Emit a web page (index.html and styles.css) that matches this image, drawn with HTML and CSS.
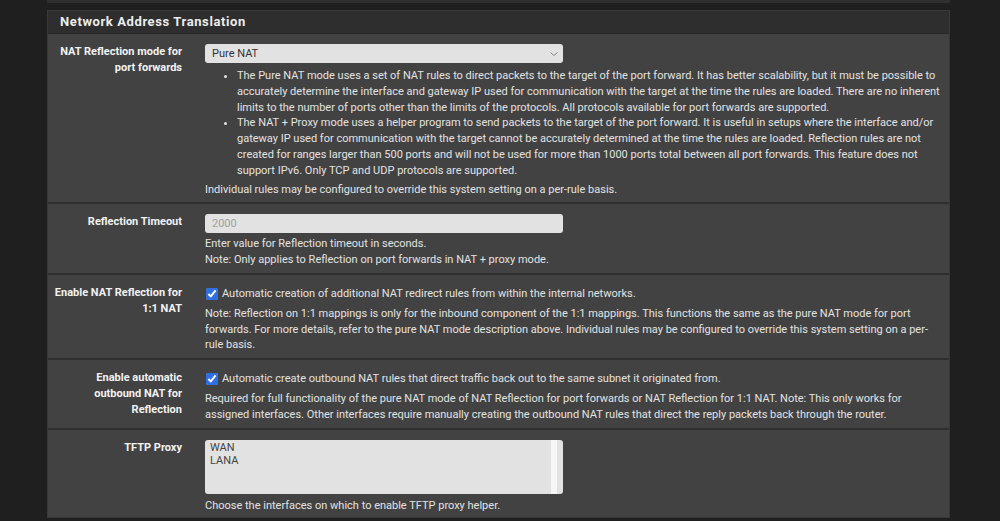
FILE: index.html
```html
<!DOCTYPE html>
<html lang="en">
    <head>
        <meta charset="UTF-8">
        <title>Firewall: NAT settings</title>
        <link rel="stylesheet" href="styles.css">
    </head>
    <body>
        <div class="prev-panel"></div>

        <div class="panel">
            <h2 class="panel-heading">Network Address Translation</h2>

            <div class="form-row">
                <label class="row-label">NAT Reflection mode for port forwards</label>
                <div class="row-body">
                    <div class="field select-field">
                        <span>Pure NAT</span>
                        <svg class="chevron" width="10" height="6" viewBox="0 0 10 6">
                            <path d="M1.5 1.5l3.5 3 3.5-3" fill="none" stroke="#8a8a8a" stroke-width="1"/>
                        </svg>
                    </div>
                    <ul class="help-list">
                        <li>The Pure NAT mode uses a set of NAT rules to direct packets to the target of the port forward. It has better scalability, but it must be possible to accurately determine the interface and gateway IP used for communication with the target at the time the rules are loaded. There are no inherent limits to the number of ports other than the limits of the protocols. All protocols available for port forwards are supported.</li>
                        <li>The NAT + Proxy mode uses a helper program to send packets to the target of the port forward. It is useful in setups where the interface and/or gateway IP used for communication with the target cannot be accurately determined at the time the rules are loaded. Reflection rules are not created for ranges larger than 500 ports and will not be used for more than 1000 ports total between all port forwards. This feature does not support IPv6. Only TCP and UDP protocols are supported.</li>
                    </ul>
                    <p class="help">Individual rules may be configured to override this system setting on a per-rule basis.</p>
                </div>
            </div>

            <div class="form-row">
                <label class="row-label">Reflection Timeout</label>
                <div class="row-body">
                    <div class="field input-field">2000</div>
                    <p class="help">Enter value for Reflection timeout in seconds.<br>Note: Only applies to Reflection on port forwards in NAT + proxy mode.</p>
                </div>
            </div>

            <div class="form-row">
                <label class="row-label">Enable NAT Reflection for 1:1 NAT</label>
                <div class="row-body">
                    <label class="check"><input type="checkbox" checked> Automatic creation of additional NAT redirect rules from within the internal networks.</label>
                    <p class="help">Note: Reflection on 1:1 mappings is only for the inbound component of the 1:1 mappings. This functions the same as the pure NAT mode for port forwards. For more details, refer to the pure NAT mode description above. Individual rules may be configured to override this system setting on a per-rule basis.</p>
                </div>
            </div>

            <div class="form-row">
                <label class="row-label">Enable automatic outbound NAT for Reflection</label>
                <div class="row-body">
                    <label class="check"><input type="checkbox" checked> Automatic create outbound NAT rules that direct traffic back out to the same subnet it originated from.</label>
                    <p class="help">Required for full functionality of the pure NAT mode of NAT Reflection for port forwards or NAT Reflection for 1:1 NAT. Note: This only works for assigned interfaces. Other interfaces require manually creating the outbound NAT rules that direct the reply packets back through the router.</p>
                </div>
            </div>

            <div class="form-row last">
                <label class="row-label">TFTP Proxy</label>
                <div class="row-body">
                    <div class="field list-field">
                        <div class="options">
                            <div>WAN</div>
                            <div>LANA</div>
                        </div>
                        <div class="scroll-track"></div>
                    </div>
                    <p class="help">Choose the interfaces on which to enable TFTP proxy helper.</p>
                </div>
            </div>
        </div>
    </body>
</html>
```

FILE: styles.css
```css
body {
    margin: 0;
    background-color: #1f1f1f;
    color: #e2e2e2;
    font-family: Roboto, "Liberation Sans", sans-serif;
    font-size: 11px;
    line-height: 15.8px;
}

.prev-panel {
    margin: 0 50px 0 47px;
    height: 3px;
    background-color: #2f2f2f;
}

.panel {
    margin: 7px 50px 0 47px;
    background-color: #424242;
    border: 1px solid #383838;
    border-top: none;
}

.panel-heading {
    margin: 0;
    height: 22px;
    padding-left: 12px;
    background-color: #2e2e2e;
    border-top: 1px solid #3a3a3a;
    border-bottom: 1px solid #2a2a2a;
    color: #ececec;
    font-size: 13px;
    font-weight: bold;
    letter-spacing: 0.6px;
    line-height: 22px;
}

.form-row {
    display: grid;
    grid-template-columns: 128px 1fr;
    column-gap: 23px;
    padding: 10px 4px 5px 6px;
    border-bottom: 2px solid #2f2f2f;
}

.form-row.last {
    border-bottom: none;
    padding-bottom: 4px;
}

.row-label {
    text-align: right;
    font-weight: bold;
    font-size: 11px;
    color: #f2f2f2;
    line-height: 15.8px;
}

.field {
    width: 358px;
    box-sizing: border-box;
    background-color: #e2e2e2;
    border-radius: 3px;
    color: #333333;
    padding: 0 7px;
}

.select-field {
    height: 19px;
    line-height: 19px;
    display: flex;
    justify-content: space-between;
    align-items: center;
    padding-right: 4px;
}

.input-field {
    height: 19px;
    line-height: 19px;
    color: #a0a0a0;
}

.list-field {
    height: 54px;
    display: flex;
    padding: 0 6px 0 5px;
    line-height: 13px;
    color: #444444;
}

.options {
    flex: 1;
    padding-top: 1px;
}

.scroll-track {
    width: 6px;
    background-color: #f6f6f6;
}

.help-list {
    margin: 5px 0 0 0;
    padding-left: 32px;
}

.help {
    margin: 3px 0 0 0;
}

.check + .help {
    margin-top: 4px;
}

.list-field + .help {
    margin-top: 4px;
}

.check {
    display: flex;
    align-items: center;
    gap: 4px;
    margin-top: 1px;
}

.check input {
    margin: 0 0 0 1px;
    width: 12px;
    height: 12px;
    accent-color: #2f6fe4;
}
```
